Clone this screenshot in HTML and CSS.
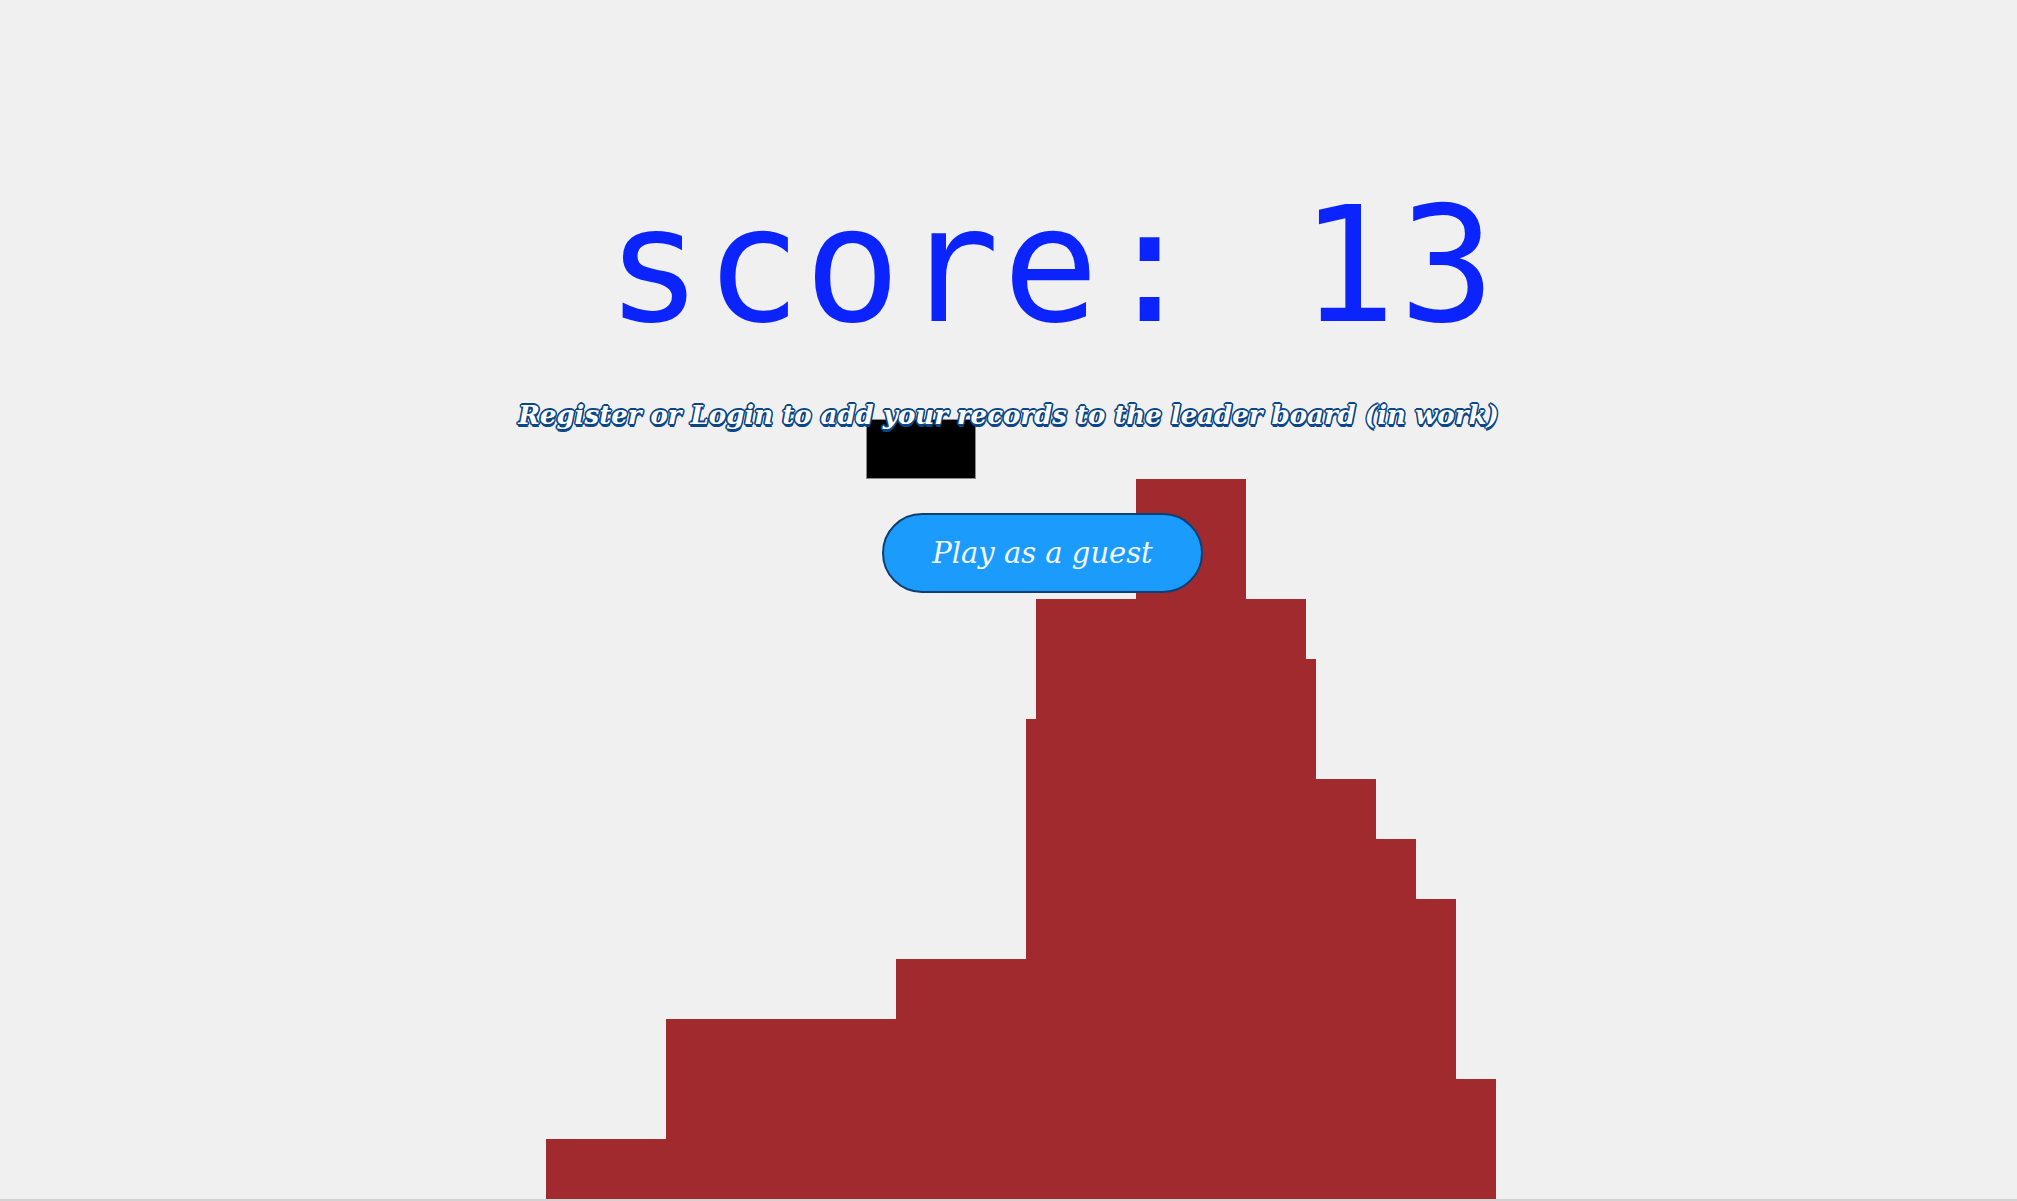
FILE: index.html
```html
<!DOCTYPE html>
<html lang="en">
<head>
<meta charset="utf-8">
<title>Score</title>
<link rel="stylesheet" href="styles.css">
</head>
<body>
<div class="playfield">
  <div class="bar" style="width:120px;height:60px"></div>
  <div class="bar" style="width:230px;height:180px"></div>
  <div class="bar" style="width:130px;height:240px"></div>
  <div class="bar" style="width:10px;height:480px"></div>
  <div class="bar" style="width:100px;height:600px"></div>
  <div class="bar" style="width:110px;height:720px"></div>
  <div class="bar" style="width:60px;height:600px"></div>
  <div class="bar" style="width:10px;height:540px"></div>
  <div class="bar" style="width:60px;height:420px"></div>
  <div class="bar" style="width:40px;height:360px"></div>
  <div class="bar" style="width:40px;height:300px"></div>
  <div class="bar" style="width:40px;height:120px"></div>
  <div class="piece"></div>
</div>
<main class="page">
  <h1 class="score">score: 13</h1>
  <p class="notice">Register or Login to add your records to the leader board (in work)</p>
  <button class="guest">Play as a guest</button>
</main>
</body>
</html>
```

FILE: styles.css
```css
html, body {
  margin: 0;
  padding: 0;
}
body {
  background: #f0f0f0;
  height: 1201px;
  overflow: hidden;
  position: relative;
}
.playfield {
  position: absolute;
  inset: 0;
  border-bottom: 2px solid #d3d3d3;
  display: flex;
  align-items: flex-end;
  padding-left: 545.7px;
  z-index: 0;
}
.bar {
  background: #a12a2e;
  flex: none;
}
.piece {
  position: absolute;
  left: 866px;
  top: 419px;
  width: 108px;
  height: 58px;
  background: #000;
  border: 1px solid #8a8a8a;
}
.page {
  position: relative;
  z-index: 1;
  display: flex;
  flex-direction: column;
  align-items: center;
}
.score {
  margin: 186px 0 0 87px;
  font-family: "DejaVu Sans Mono", monospace;
  font-weight: normal;
  font-size: 160px;
  letter-spacing: 2.8px;
  line-height: 1;
  color: #0b24fe;
  white-space: pre;
}
.notice {
  margin: 53px 0 0 0;
  font-family: "DejaVu Serif", serif;
  font-style: italic;
  font-weight: bold;
  font-size: 26px;
  line-height: 32px;
  color: #fff;
  text-shadow:
    1.6px 0 0 #0b4686, -1.6px 0 0 #0b4686, 0 1.6px 0 #0b4686, 0 -1.6px 0 #0b4686,
    1.2px 1.2px 0 #0b4686, -1.2px 1.2px 0 #0b4686, 1.2px -1.2px 0 #0b4686, -1.2px -1.2px 0 #0b4686,
    0.5px 2.5px 0 #0b4686;
}
.guest {
  margin: 82px 0 0 68px;
  width: 321px;
  height: 80px;
  border: 2px solid #0d3f73;
  border-radius: 40px;
  background: #1b9cfc;
  color: #f4f6ff;
  font-family: "DejaVu Serif", serif;
  font-style: italic;
  font-size: 29px;
  padding: 0;
}
```
